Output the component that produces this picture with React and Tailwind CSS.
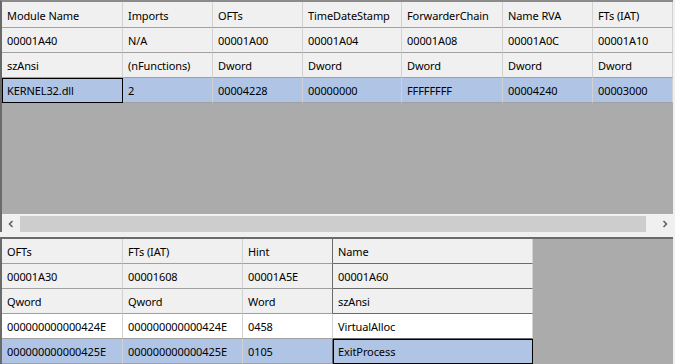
import React from "react";

const topCols = ["w-[121px]", "w-[90px]", "w-[90px]", "w-[99px]", "w-[101px]", "w-[90px]", "w-[80px]"];

const topRows = [
  { cells: ["Module Name", "Imports", "OFTs", "TimeDateStamp", "ForwarderChain", "Name RVA", "FTs (IAT)"], h: "h-[26px]" },
  { cells: ["00001A40", "N/A", "00001A00", "00001A04", "00001A08", "00001A0C", "00001A10"], h: "h-[25px]" },
  { cells: ["szAnsi", "(nFunctions)", "Dword", "Dword", "Dword", "Dword", "Dword"], h: "h-[25px]" },
  { cells: ["KERNEL32.dll", "2", "00004228", "00000000", "FFFFFFFF", "00004240", "00003000"], h: "h-[25px]", selected: true, focus: 0 },
];

const lowCols = ["w-[121px]", "w-[120px]", "w-[90px]", "w-[200px]"];

const lowRows = [
  { cells: ["OFTs", "FTs (IAT)", "Hint", "Name"] },
  { cells: ["00001A30", "00001608", "00001A5E", "00001A60"] },
  { cells: ["Qword", "Qword", "Word", "szAnsi"] },
  { cells: ["000000000000424E", "000000000000424E", "0458", "VirtualAlloc"], white: true },
  { cells: ["000000000000425E", "000000000000425E", "0105", "ExitProcess"], selected: true, focus: 3 },
];

function rowBg(row) {
  if (row.selected) return "bg-[#b0c4e5]";
  if (row.white) return "bg-white";
  return "bg-[#f0f0f0]";
}

function Cell({ text, width, height, bg, focus, rightDark, bottomDark }) {
  return (
    <div
      className={`${width} ${height} ${bg} flex shrink-0 items-center overflow-hidden whitespace-nowrap border-r border-b pl-[5px] pt-px ${
        rightDark ? "border-r-[#6a6a6a]" : "border-r-[#d2d2d2]"
      } ${bottomDark ? "border-b-[#6a6a6a]" : "border-b-[#a0a0a0]"} ${
        focus ? "outline-1 outline-solid outline-black -outline-offset-1" : ""
      }`}
    >
      {text}
    </div>
  );
}

function Chevron({ dir }) {
  return (
    <svg width="8" height="8" viewBox="0 0 8 8">
      <polyline
        points={dir === "left" ? "5.5,1 2.5,4 5.5,7" : "2.5,1 5.5,4 2.5,7"}
        fill="none"
        stroke="#606060"
        strokeWidth="1.6"
      />
    </svg>
  );
}

export default function App() {
  return (
    <div className="h-[364px] w-[675px] overflow-hidden bg-[#f0f0f0] font-['Segoe_UI','Noto_Sans',sans-serif] text-[11px] leading-none tracking-[-0.1px] text-black">
      {/* upper grid */}
      <div className="flex h-[232px] w-[673px] flex-col border-t-2 border-l-2 border-t-[#8a8a8a] border-l-[#6a6a6a] bg-[#ababab]">
        <div className="flex flex-col">
          {topRows.map((row, r) => (
            <div key={r} className="flex">
              {row.cells.map((c, i) => (
                <Cell
                  key={i}
                  text={c}
                  width={topCols[i]}
                  height={row.h}
                  bg={rowBg(row)}
                  focus={row.focus === i}
                />
              ))}
            </div>
          ))}
        </div>
        <div className="flex-1" />
        <div className="flex h-[18px] border-t border-t-[#f4f4f4] bg-[#f0f0f0] pt-px">
          <div className="flex w-[18px] items-center justify-center">
            <Chevron dir="left" />
          </div>
          <div className="w-[626px] bg-[#cdcdcd]" />
          <div className="flex-1" />
          <div className="flex w-[17px] items-center justify-center">
            <Chevron dir="right" />
          </div>
        </div>
      </div>

      <div className="h-[5px]" />

      {/* lower grid */}
      <div className="flex w-[673px] border-t-2 border-l-2 border-t-[#6a6a6a] border-l-[#6a6a6a] bg-[#ababab]">
        <div className="flex flex-col">
          {lowRows.map((row, r) => (
            <div key={r} className="flex">
              {row.cells.map((c, i) => (
                <Cell
                  key={i}
                  text={c}
                  width={lowCols[i]}
                  height="h-[25px]"
                  bg={rowBg(row)}
                  focus={row.focus === i}
                  rightDark={i === 2 && !row.white}
                  bottomDark={i === 3}
                />
              ))}
            </div>
          ))}
        </div>
      </div>
    </div>
  );
}
